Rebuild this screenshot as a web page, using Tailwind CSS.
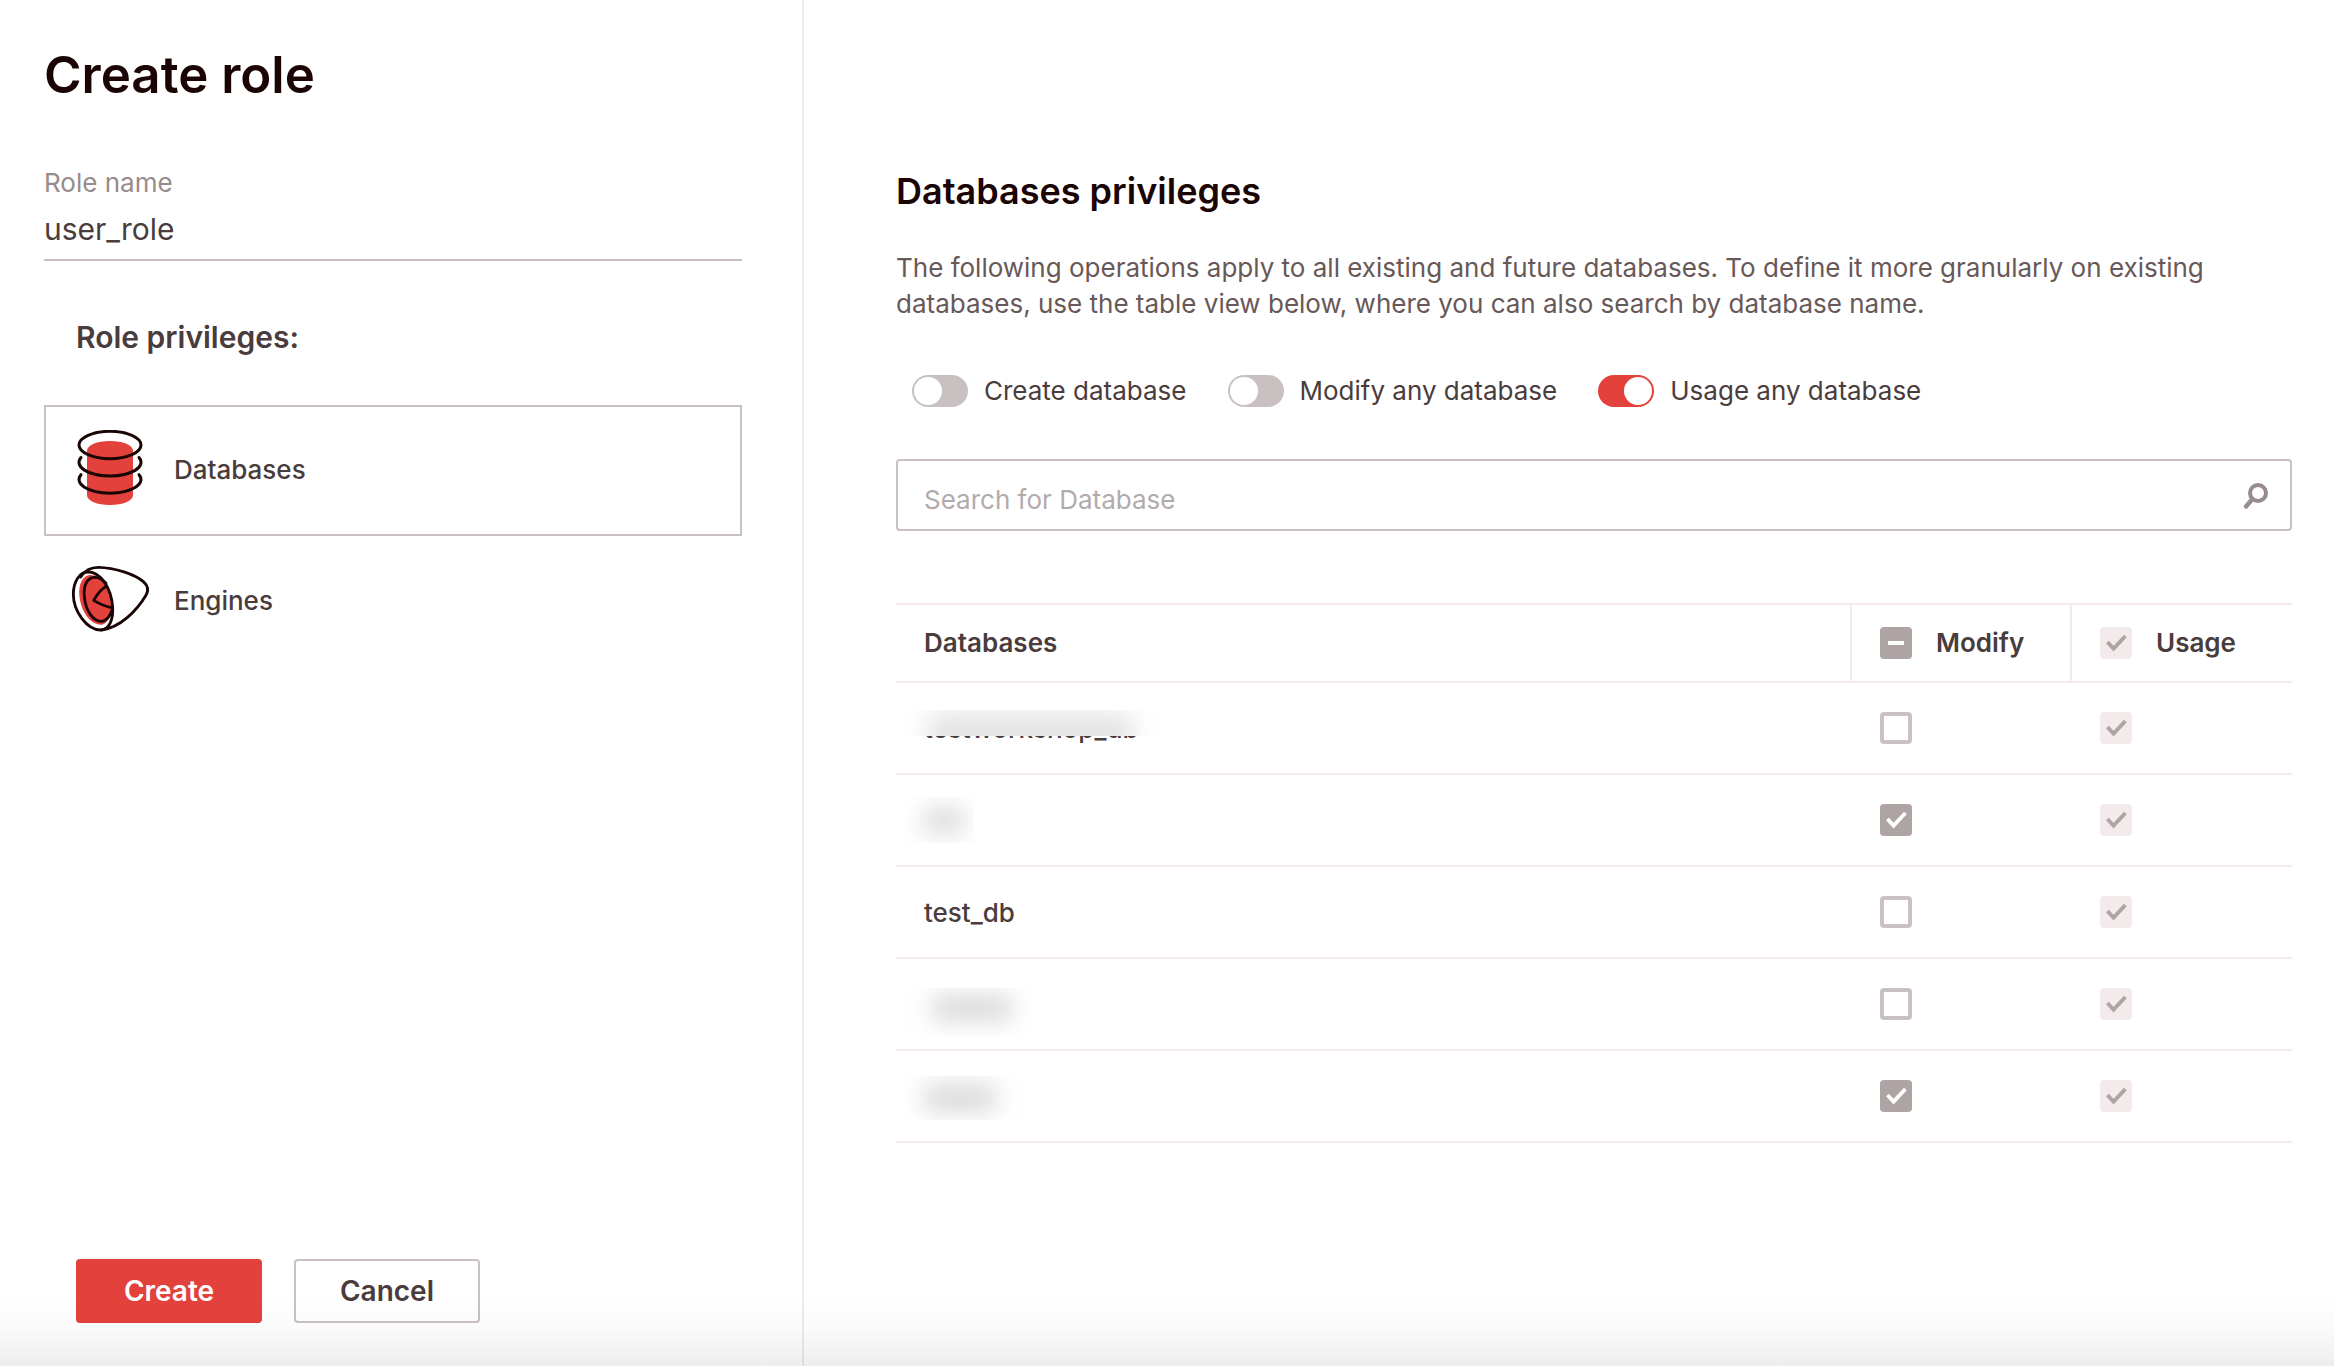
<!DOCTYPE html>
<html lang="en">
<head>
<meta charset="utf-8">
<meta name="viewport" content="width=device-width, initial-scale=1">
<title>Create role</title>
<script src="https://cdn.jsdelivr.net/npm/@tailwindcss/browser@4"></script>
</head>
<body class="relative bg-white font-['Inter',sans-serif] text-[26px] leading-9 text-[#4a3c3c]">
<svg class="hidden" aria-hidden="true">
  <symbol id="check" viewBox="0 0 32 32"><path d="M7.400 15 13.600 21.600 25.400 9" fill="none" stroke="currentColor" stroke-width="3.800"/></symbol>
</svg>
<form class="flex min-h-screen">
  <aside class="flex w-[804px] shrink-0 flex-col border-r-2 border-[#f2eaeb] pr-15 pb-[43px] pl-11">
    <h1 class="mt-[43px] text-[51px] leading-16 font-semibold text-[#1a0404]">Create role</h1>
    <div class="mt-[58px] flex flex-col border-b-2 border-[#c9c0c1] pb-2.5">
      <label for="role" class="text-[#988b8b]">Role name</label>
      <input id="role" type="text" value="user_role" class="mt-2 h-10 text-[30px] outline-none">
    </div>
    <h2 class="mt-14 ml-8 text-[30px] leading-10 font-semibold">Role privileges:</h2>
    <nav class="mt-12 flex flex-col font-medium">
      <a href="#databases" class="flex h-[131px] items-center border-2 border-[#c9c0c1] pb-0.5 pl-6">
        <svg class="size-20" viewBox="0 1 80 80" fill="none" stroke="#1a0404" stroke-width="3" stroke-linecap="round" aria-hidden="true">
          <path d="M17 22C17 16 27 12 40 12S63 16 63 22V66C63 72 53 76 40 76S17 72 17 66Z" fill="#e3413c" stroke="none"/>
          <ellipse cx="40" cy="16" rx="31" ry="13.700"/>
          <path d="M11 28.500A31 13.700 0 1 0 69 28.500M11 45.700A31 13.700 0 1 0 69 45.700"/>
        </svg>
        <span class="ml-6">Databases</span>
      </a>
      <a href="#engines" class="flex h-[131px] items-center border-2 border-transparent pb-0.5 pl-6">
        <svg class="size-20 overflow-visible" viewBox="0 1 80 80" fill="none" aria-hidden="true">
          <g transform="translate(-10 -4) scale(.3333)" stroke="#1a0404" stroke-width="8.500" stroke-linecap="round" stroke-linejoin="round">
            <path d="M88 57C68 60 55 85 58 118C62 165 90 207 125 206C140 203 152 185 157 158C155 120 135 75 112 63C104 58 96 56 88 57Z" fill="#e3413c" stroke="none"/>
            <path d="M85 48C58 48 40 77 40 115C40 165 80 222 122 222C148 222 160 190 158 155C155 95 120 48 85 48Z"/>
            <path d="M62 63C75 42 92 34 115 34C165 35 225 55 250 77C265 90 267 103 258 118C230 165 180 215 125 222"/>
            <path d="M138 82C126 69 112 62 98 65C80 69 70 90 73 120C76 165 100 197 125 196C140 194 150 180 155 165"/>
            <path d="M140 91C125 98 113 112 101 133C120 145 138 151 157 156"/>
          </g>
        </svg>
        <span class="ml-6">Engines</span>
      </a>
    </nav>
    <div class="mt-auto ml-8 flex gap-8 text-[28px] font-semibold">
      <button type="submit" class="h-16 w-[186px] rounded bg-[#e3413c] text-white">Create</button>
      <button type="button" class="h-16 w-[186px] rounded border-2 border-[#c9c0c1] bg-white">Cancel</button>
    </div>
  </aside>
  <main class="min-w-0 flex-1 pt-[166px] pr-[42px] pl-[92px]">
    <h2 class="text-4xl leading-[50px] font-semibold text-[#1a0404]">Databases privileges</h2>
    <p class="mt-[34px] text-[#685858]">The following operations apply to all existing and future databases. To define it more granularly on existing databases, use the table view below, where you can also search by database name.</p>
    <div class="mt-[51px] ml-4 flex gap-[41px]">
      <label class="flex items-center gap-4"><input type="checkbox" role="switch" class="h-8 w-14 appearance-none rounded-full bg-[#c9c0c1] p-0.5 before:block before:size-7 before:rounded-full before:bg-white checked:bg-[#e3413c] checked:before:ml-6">Create database</label>
      <label class="flex items-center gap-4"><input type="checkbox" role="switch" class="h-8 w-14 appearance-none rounded-full bg-[#c9c0c1] p-0.5 before:block before:size-7 before:rounded-full before:bg-white checked:bg-[#e3413c] checked:before:ml-6">Modify any database</label>
      <label class="flex items-center gap-4"><input type="checkbox" role="switch" checked class="h-8 w-14 appearance-none rounded-full bg-[#c9c0c1] p-0.5 before:block before:size-7 before:rounded-full before:bg-white checked:bg-[#e3413c] checked:before:ml-6">Usage any database</label>
    </div>
    <div class="mt-[50px] flex h-[72px] items-center rounded border-2 border-[#c9c0c1] pr-5 pl-[26px]">
      <input type="search" aria-label="Search for Database" placeholder="Search for Database" class="h-full flex-1 pt-2 outline-none placeholder:text-[#b3abab]">
      <svg class="size-8" viewBox="0 0 32 32" fill="none" stroke="#988b8b" stroke-linecap="round" aria-hidden="true"><circle cx="20" cy="14" r="8" stroke-width="4"/><path d="M14 20.500 8 27.500" stroke-width="4.400"/></svg>
    </div>

    <table class="mt-[72px] w-full table-fixed border-separate border-spacing-0 text-left font-medium">
      <thead>
        <tr class="h-20 *:border-y-2 *:border-[#f2eaeb] *:font-semibold">
          <th scope="col" class="pl-7">Databases</th>
          <th scope="col" class="w-[220px] border-l-2 pl-7">
            <label class="flex items-center gap-6">
              <span class="grid size-8 *:col-start-1 *:row-start-1"><input type="checkbox" class="size-8 appearance-none rounded bg-[#afa4a4]"><span class="h-1 w-4 place-self-center bg-white"></span></span>Modify
            </label>
          </th>
          <th scope="col" class="w-[222px] border-l-2 pl-7">
            <label class="flex items-center gap-6">
              <span class="grid size-8 text-[#afa4a4] *:col-start-1 *:row-start-1"><input type="checkbox" checked disabled class="size-8 appearance-none rounded bg-[#f2eaeb]"><svg class="size-8"><use href="#check"/></svg></span><span>Usage</span>
            </label>
          </th>
        </tr>
      </thead>
      <tbody>
        <tr class="h-[92px] *:border-b-2 *:border-[#f2eaeb]">
          <td class="relative pt-0.5 pl-7">testworkshop_db
            <span class="absolute top-[27px] left-1 h-[26px] w-[266px] overflow-hidden bg-white"><span class="mt-1 ml-7 block h-9 w-[204px] bg-[#e2e2e2] blur-[12px]"></span></span>
          </td>
          <td class="pl-[30px]"><input type="checkbox" aria-label="Modify testworkshop_db" class="block size-8 appearance-none rounded border-4 border-[#c9c0c1]"></td>
          <td class="pl-[30px]"><span class="grid size-8 text-[#afa4a4] *:col-start-1 *:row-start-1"><input type="checkbox" checked disabled aria-label="Usage testworkshop_db" class="size-8 appearance-none rounded bg-[#f2eaeb]"><svg class="size-8"><use href="#check"/></svg></span></td>
        </tr>
        <tr class="h-[92px] *:border-b-2 *:border-[#f2eaeb]">
          <td class="pl-2"><span class="block h-[46px] w-[70px] overflow-hidden"><span class="mt-3 ml-5 block h-6 w-10 bg-[#d8d8d8] blur-[12px]"></span></span></td>
          <td class="pl-[30px]"><span class="grid size-8 text-white *:col-start-1 *:row-start-1"><input type="checkbox" checked aria-label="Modify" class="size-8 appearance-none rounded bg-[#afa4a4]"><svg class="size-8"><use href="#check"/></svg></span></td>
          <td class="pl-[30px]"><span class="grid size-8 text-[#afa4a4] *:col-start-1 *:row-start-1"><input type="checkbox" checked disabled aria-label="Usage" class="size-8 appearance-none rounded bg-[#f2eaeb]"><svg class="size-8"><use href="#check"/></svg></span></td>
        </tr>
        <tr class="h-[92px] *:border-b-2 *:border-[#f2eaeb]">
          <td class="pt-0.5 pl-7">test_db</td>
          <td class="pl-[30px]"><input type="checkbox" aria-label="Modify test_db" class="block size-8 appearance-none rounded border-4 border-[#c9c0c1]"></td>
          <td class="pl-[30px]"><span class="grid size-8 text-[#afa4a4] *:col-start-1 *:row-start-1"><input type="checkbox" checked disabled aria-label="Usage test_db" class="size-8 appearance-none rounded bg-[#f2eaeb]"><svg class="size-8"><use href="#check"/></svg></span></td>
        </tr>
        <tr class="h-[92px] *:border-b-2 *:border-[#f2eaeb]">
          <td class="pt-4 pl-2"><span class="block h-12 w-32 overflow-hidden"><span class="mt-2 ml-7 block h-6 w-20 bg-[#d6d6d6] blur-[12px]"></span></span></td>
          <td class="pl-[30px]"><input type="checkbox" aria-label="Modify" class="block size-8 appearance-none rounded border-4 border-[#c9c0c1]"></td>
          <td class="pl-[30px]"><span class="grid size-8 text-[#afa4a4] *:col-start-1 *:row-start-1"><input type="checkbox" checked disabled aria-label="Usage" class="size-8 appearance-none rounded bg-[#f2eaeb]"><svg class="size-8"><use href="#check"/></svg></span></td>
        </tr>
        <tr class="h-[92px] *:border-b-2 *:border-[#f2eaeb]">
          <td class="pt-1 pl-2"><span class="block h-11 w-32 overflow-hidden"><span class="mt-2 ml-5 block h-7 w-18 bg-[#d9d9d9] blur-[12px]"></span></span></td>
          <td class="pl-[30px]"><span class="grid size-8 text-white *:col-start-1 *:row-start-1"><input type="checkbox" checked aria-label="Modify" class="size-8 appearance-none rounded bg-[#afa4a4]"><svg class="size-8"><use href="#check"/></svg></span></td>
          <td class="pl-[30px]"><span class="grid size-8 text-[#afa4a4] *:col-start-1 *:row-start-1"><input type="checkbox" checked disabled aria-label="Usage" class="size-8 appearance-none rounded bg-[#f2eaeb]"><svg class="size-8"><use href="#check"/></svg></span></td>
        </tr>
      </tbody>
    </table>
  </main>
</form>
<div class="pointer-events-none absolute inset-x-0 bottom-0 h-[72px] bg-linear-to-b from-transparent via-black/[.02] to-black/[.07]"></div>
</body>
</html>
